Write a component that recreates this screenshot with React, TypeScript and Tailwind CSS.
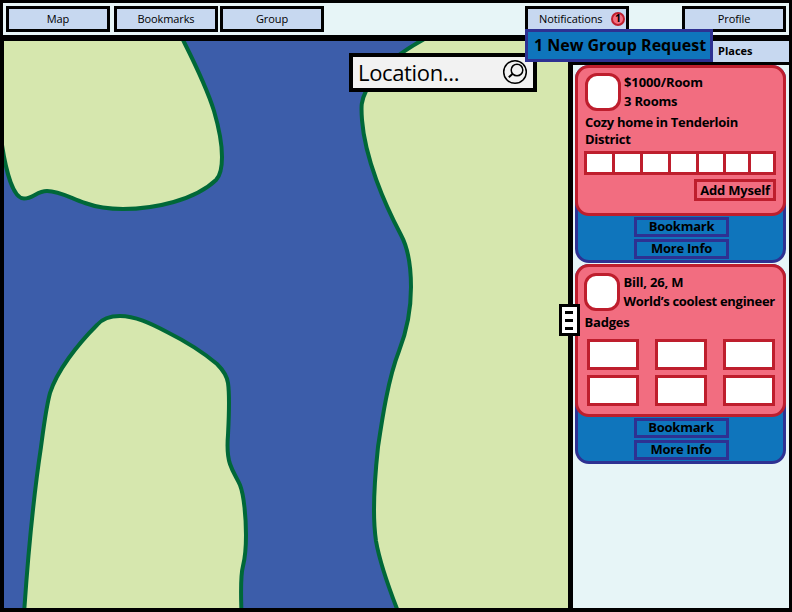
import type { ReactNode } from "react";

function NavButton({ children, className = "" }: { children: ReactNode; className?: string }) {
  return (
    <button
      className={`flex h-[26px] w-[104px] shrink-0 items-center justify-center border-[3px] border-black bg-[#c7d8f0] pb-0.5 text-[11px] leading-none tracking-[-0.1px] ${className}`}
    >
      {children}
    </button>
  );
}

function CardAction({ children }: { children: ReactNode }) {
  return (
    <button className="flex h-5 w-[95px] items-center justify-center border-[3px] border-[#2e3192] text-[13px] leading-none font-bold tracking-[-0.25px] whitespace-nowrap">
      {children}
    </button>
  );
}

function Card({ children, className = "" }: { children: ReactNode; className?: string }) {
  return (
    <article className={`flex w-[211px] flex-col rounded-[14px] border-[3px] border-[#2e3192] bg-[#0f75bc] ${className}`}>
      <div className="-mx-[3px] -mt-[3px] flex-1 rounded-[14px] border-[3px] border-[#be1e2d] bg-[#f26d80] text-[13px] font-bold tracking-[-0.2px] whitespace-nowrap">
        {children}
      </div>
      <div className="mt-px mb-[1.5px] flex flex-col items-center gap-0.5 pl-0.5">
        <CardAction>Bookmark</CardAction>
        <CardAction>More Info</CardAction>
      </div>
    </article>
  );
}

function Avatar() {
  return <div className="h-[38px] w-9 shrink-0 rounded-[12px] border-[3px] border-[#be1e2d] bg-white" />;
}

function MapView() {
  return (
    <svg className="block h-full w-full" viewBox="4 41 564 567" preserveAspectRatio="none">
      <rect x="4" y="41" width="564" height="567" fill="#3c5daa" />
      <g fill="#d6e7ae" stroke="#006838" strokeWidth="4">
        <path d="M182 38C192 58 206 85 214 111C219 128 222 145 222 157C222 170 220 176 216 180C195 200 155 209 123 209C108 209 96 207 85 203C72 199 60 191 47 191C37 191 33 198.500 24 198.500C14 198.500 6 175 1 138V30Z" />
        <path d="M24 614C29 540 36 480 41 447C45 417 46 408 50 393C57 371 77 345 97 325C102 319 110 316 120 316C135 316 150 323 167 332C187 342 204 353 217 364C224 371 227 376 228 383C230 397 229 415 228 435C227 447 227 455 230 464C233 473 237 478 240 485C244 495 246 518 246 535C246 550 245 558 243 566C240 577 241 594 241.500 614Z" />
        <path d="M430 36C405 49 379 66 366 91C361 101 361 106 362 120C365 158 384 203 401 235C408 248 411 266 411 287C411 308 408 328 399 351C388 379 382 420 378 447C375 475 374 493 374 510C374 525 375 534 376 541C380 564 388 586 399 614H590V36Z" />
      </g>
    </svg>
  );
}

export default function App() {
  return (
    <div className="relative flex h-[612px] w-[792px] flex-col overflow-hidden bg-black px-[3px] pt-[3px] pb-1 font-['Open_Sans','Noto_Sans',sans-serif] text-black [font-stretch:90%]">
      <header className="flex h-8 shrink-0 items-start bg-[#e7f5f7] pt-[3px] pl-[3px]">
        <NavButton>Map</NavButton>
        <NavButton className="ml-1">Bookmarks</NavButton>
        <NavButton className="ml-[2px]">Group</NavButton>
        <NavButton className="ml-auto">
          <span className="ml-[11px]">Notifications</span>
          <span className="mt-px mr-px ml-auto flex h-[14px] w-[14px] items-center justify-center rounded-full border-2 border-[#be1e2d] bg-[#f26d80] text-[10.5px] font-bold">
            1
          </span>
        </NavButton>
        <NavButton className="mr-[3px] ml-[53px]">Profile</NavButton>
      </header>

      <main className="mt-1.5 ml-px flex min-h-0 flex-1">
        <section className="w-[564px] shrink-0">
          <MapView />
        </section>

        <aside className="ml-[5px] flex min-w-0 flex-1 flex-col bg-[#e7f5f7]">
          <div className="flex h-6 shrink-0 items-center border-b-[3px] border-black bg-[#c7d8f0] pl-[145px] text-[11px] font-bold">
            Places
          </div>

          <Card className="ml-[2px] h-[198px]">
            <div className="flex gap-1 pt-[5px] pl-[7px]">
              <Avatar />
              <div className="-ml-px leading-[19px]">
                <div className="tracking-[-0.1px]">$1000/Room</div>
                <div>3 Rooms</div>
              </div>
            </div>
            <p className="mt-[3px] pl-[7px] leading-[17px] tracking-[-0.3px]">
              Cozy home in Tenderloin
              <br />
              District
            </p>
            <div className="mt-[3px] ml-[6px] grid h-6 w-[192px] grid-cols-[25px_25px_25px_25px_24px_22px_22px] gap-[3px] border-[3px] border-[#be1e2d] bg-[#be1e2d]">
              {Array.from({ length: 7 }, (_, i) => (
                <div key={i} className="bg-white" />
              ))}
            </div>
            <button className="mt-1 ml-[116px] flex h-[22px] w-[82px] items-center justify-center border-[3px] border-[#be1e2d] leading-none">
              Add Myself
            </button>
          </Card>

          <Card className="mt-px ml-[1.5px] h-[200px]">
            <div className="flex gap-1 pt-[6px] pl-[6px]">
              <Avatar />
              <div className="leading-[19px]">
                <div>Bill, 26, M</div>
                <div className="tracking-[-0.3px]">World’s coolest engineer</div>
              </div>
            </div>
            <p className="mt-[3px] pl-[7px] leading-[17px]">Badges</p>
            <div className="mt-[8px] ml-[9px] grid w-[188px] grid-cols-[52px_52px_52px] justify-between gap-y-[5px]">
              {Array.from({ length: 6 }, (_, i) => (
                <div key={i} className="h-[31px] border-[3px] border-[#be1e2d] bg-white" />
              ))}
            </div>
          </Card>
        </aside>
      </main>

      <div className="absolute top-[53px] left-[349px] flex h-[39px] w-[188px] items-center justify-between border-4 border-black bg-[#f2f2f2] pr-[5px] pl-[5px] text-[22px] tracking-[-0.35px]">
        <span>Location...</span>
        <svg className="h-[26px] w-[26px] -translate-y-px" viewBox="0 0 26 26" fill="none" stroke="black" strokeWidth="1.5">
          <circle cx="13" cy="13" r="11.3" />
          <circle cx="15" cy="11" r="5.800" />
          <path d="M10.700 14.700L6.800 18.200" strokeWidth="2" />
        </svg>
      </div>

      <div className="absolute top-[29px] left-[525px] flex h-[33px] w-[188px] items-center justify-center border-[3px] border-[#2e3192] bg-[#0f75bc] pb-px pl-0.5 text-[16px] font-bold whitespace-nowrap">
        1 New Group Request
      </div>

      <div className="absolute top-[304px] left-[558.5px] flex h-8 w-[21px] flex-col items-center justify-center gap-[5px] border-[3px] border-black bg-white">
        <div className="h-[3px] w-2 bg-black" />
        <div className="h-[3px] w-2 bg-black" />
        <div className="h-[3px] w-2 bg-black" />
      </div>
    </div>
  );
}
